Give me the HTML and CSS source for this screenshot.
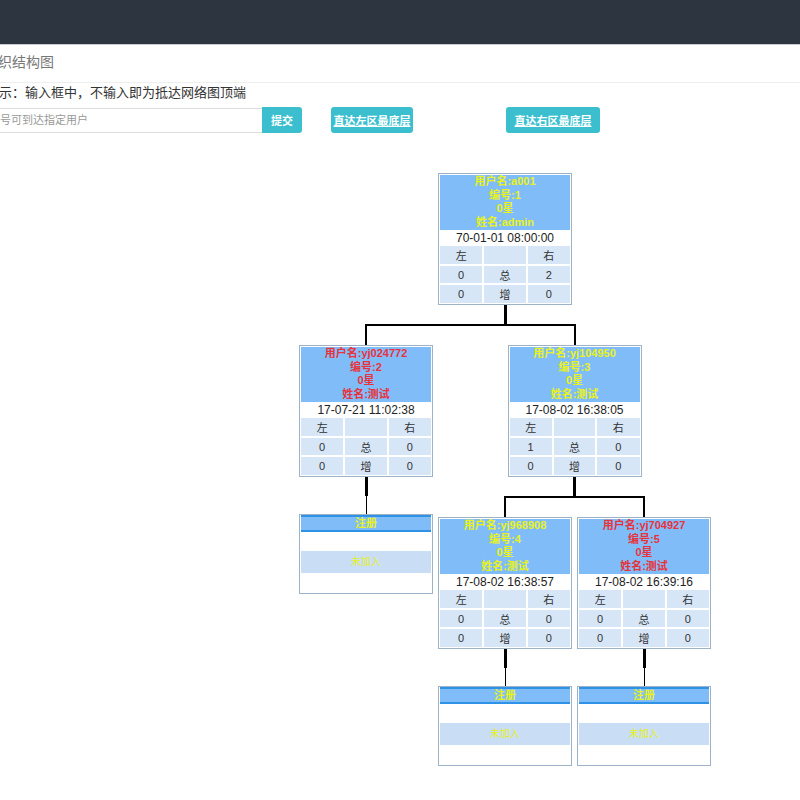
FILE: index.html
```html
<!DOCTYPE html>
<html lang="zh-CN">
<head>
    <meta charset="UTF-8">
    <meta name="viewport" content="width=device-width, initial-scale=1.0">
    <title>组织结构图</title>
    <link rel="stylesheet" href="styles.css">
</head>
<body>
    <div class="topbar"></div>

    <div class="page">
        <div class="page-title">组织结构图</div>
        <p class="tip">提示：输入框中，不输入即为抵达网络图顶端</p>

        <div class="search-row">
            <input type="text" class="search-input" placeholder="请输入会员号可到达指定用户">
            <button class="btn btn-submit">提交</button>
            <a class="btn btn-left" href="#">直达左区最底层</a>
            <a class="btn btn-right" href="#">直达右区最底层</a>
        </div>

        <div class="tree">
            <div class="branch">
                <div class="card">
                    <div class="card-head yellow">用户名:a001<br>编号:1<br>0星<br>姓名:admin</div>
                    <div class="card-date">70-01-01 08:00:00</div>
                    <table class="card-table">
                        <tr><td>左</td><td></td><td>右</td></tr>
                        <tr><td>0</td><td>总</td><td>2</td></tr>
                        <tr><td>0</td><td>增</td><td>0</td></tr>
                    </table>
                </div>
                <div class="stem"></div>
                <div class="kids">
                    <div class="kid">
                        <div class="card">
                            <div class="card-head red">用户名:yj024772<br>编号:2<br>0星<br>姓名:测试</div>
                            <div class="card-date">17-07-21 11:02:38</div>
                            <table class="card-table">
                                <tr><td>左</td><td></td><td>右</td></tr>
                                <tr><td>0</td><td>总</td><td>0</td></tr>
                                <tr><td>0</td><td>增</td><td>0</td></tr>
                            </table>
                        </div>
                        <div class="stem"></div>
                        <div class="kids">
                            <div class="kid">
                                <div class="empty-card">
                                    <div class="empty-head">注册</div>
                                    <div class="empty-blank"></div>
                                    <div class="empty-mid">未加入</div>
                                    <div class="empty-blank"></div>
                                </div>
                            </div>
                        </div>
                    </div>

                    <div class="kid">
                        <div class="card">
                            <div class="card-head yellow">用户名:yj104950<br>编号:3<br>0星<br>姓名:测试</div>
                            <div class="card-date">17-08-02 16:38:05</div>
                            <table class="card-table">
                                <tr><td>左</td><td></td><td>右</td></tr>
                                <tr><td>1</td><td>总</td><td>0</td></tr>
                                <tr><td>0</td><td>增</td><td>0</td></tr>
                            </table>
                        </div>
                        <div class="stem"></div>
                        <div class="kids">
                            <div class="kid">
                                <div class="card">
                                    <div class="card-head yellow">用户名:yj968908<br>编号:4<br>0星<br>姓名:测试</div>
                                    <div class="card-date">17-08-02 16:38:57</div>
                                    <table class="card-table">
                                        <tr><td>左</td><td></td><td>右</td></tr>
                                        <tr><td>0</td><td>总</td><td>0</td></tr>
                                        <tr><td>0</td><td>增</td><td>0</td></tr>
                                    </table>
                                </div>
                                <div class="stem"></div>
                                <div class="kids">
                                    <div class="kid">
                                        <div class="empty-card">
                                            <div class="empty-head">注册</div>
                                            <div class="empty-blank"></div>
                                            <div class="empty-mid">未加入</div>
                                            <div class="empty-blank"></div>
                                        </div>
                                    </div>
                                </div>
                            </div>
                            <div class="kid">
                                <div class="card">
                                    <div class="card-head red">用户名:yj704927<br>编号:5<br>0星<br>姓名:测试</div>
                                    <div class="card-date">17-08-02 16:39:16</div>
                                    <table class="card-table">
                                        <tr><td>左</td><td></td><td>右</td></tr>
                                        <tr><td>0</td><td>总</td><td>0</td></tr>
                                        <tr><td>0</td><td>增</td><td>0</td></tr>
                                    </table>
                                </div>
                                <div class="stem"></div>
                                <div class="kids">
                                    <div class="kid">
                                        <div class="empty-card">
                                            <div class="empty-head">注册</div>
                                            <div class="empty-blank"></div>
                                            <div class="empty-mid">未加入</div>
                                            <div class="empty-blank"></div>
                                        </div>
                                    </div>
                                </div>
                            </div>
                        </div>
                    </div>
                </div>
            </div>
        </div>
    </div>
</body>
</html>
```

FILE: styles.css
```css
* {
    box-sizing: border-box;
    margin: 0;
    padding: 0;
}

body {
    font-family: "Liberation Sans", "Noto Sans CJK SC", sans-serif;
    background: #fff;
    color: #333;
    overflow: hidden;
}

.topbar {
    height: 45px;
    background: #2c3540;
    border-bottom: 1px solid #c9cdd2;
}

.page {
    margin-left: -16px;
}

.page-title {
    height: 38px;
    line-height: 34px;
    font-size: 14px;
    color: #777;
    border-bottom: 1px solid #eee;
}

.tip {
    font-size: 13px;
    line-height: 18px;
    margin-top: 1px;
    margin-left: 2px;
    color: #333;
}

.search-row {
    display: flex;
    align-items: center;
    margin-top: 5px;
    height: 26px;
}

.search-input {
    margin-left: -46px;
    width: 324px;
    height: 25px;
    border: 1px solid #ddd;
    border-right: none;
    padding-left: 6px;
    font-size: 11px;
    font-family: "Liberation Sans", "Noto Sans CJK SC", sans-serif;
    outline: none;
}

.search-input::placeholder {
    color: #999;
}

.btn {
    display: flex;
    align-items: center;
    justify-content: center;
    height: 26px;
    background: #3bbfcf;
    color: #fff;
    border: none;
    font-size: 11px;
    font-weight: bold;
    font-family: "Liberation Serif", "Noto Sans CJK SC", serif;
    text-decoration: underline;
    border-radius: 3px;
    cursor: pointer;
}

.btn-submit {
    width: 40px;
    border-radius: 0 3px 3px 0;
    text-decoration: none;
}

.btn-left {
    width: 82px;
    margin-left: 29px;
}

.btn-right {
    width: 94px;
    margin-left: 93px;
}

/* tree */
.tree {
    display: flex;
    padding-left: 315px;
    margin-top: 40px;
}

.branch,
.kid {
    display: flex;
    flex-direction: column;
    align-items: center;
}

.stem {
    width: 3px;
    height: 19px;
    background: #000;
}

.kids {
    display: flex;
    gap: 5px;
}

.kid {
    position: relative;
    padding-top: 21px;
}

.kid::before {
    content: "";
    position: absolute;
    top: 0;
    left: 50%;
    width: 2px;
    height: 21px;
    margin-left: -1px;
    background: #000;
}

.kid::after {
    content: "";
    position: absolute;
    top: 0;
    left: -3px;
    right: -3px;
    height: 2px;
    background: #000;
}

.kid:first-child::after {
    left: 50%;
}

.kid:last-child::after {
    right: 50%;
}

.kid:only-child {
    padding-top: 18px;
}

.kid:only-child::before {
    width: 1px;
    height: 18px;
    margin-left: 0;
}

.kid:only-child::after {
    display: none;
}

.card {
    width: 134px;
    border: 1px solid #9db2c7;
    padding: 1px;
    background: #fff;
}

.card-head {
    background: #80bdf8;
    font-family: "Liberation Sans", "Noto Sans CJK SC", sans-serif;
    font-weight: bold;
    font-size: 11px;
    line-height: 13.5px;
    text-align: center;
    height: 55px;
}

.yellow {
    color: #e9f220;
}

.red {
    color: #e8323c;
}

.card-date {
    height: 16px;
    line-height: 16px;
    font-size: 12px;
    text-align: center;
    color: #222;
}

.card-table {
    width: 100%;
    border-collapse: collapse;
    border-style: hidden;
    table-layout: fixed;
}

.card-table td {
    border: 2px solid #fff;
    background: #d6e6f7;
    height: 19px;
    padding: 0;
    text-align: center;
    font-size: 11px;
    color: #333;
}

.empty-card {
    width: 134px;
    height: 80px;
    border: 1px solid #9db2c7;
    padding: 0 1px;
    background: #fff;
}

.empty-head {
    height: 17px;
    line-height: 13px;
    background: #80bdf8;
    border-top: 2px solid #2e93e6;
    border-bottom: 2px solid #2e93e6;
    text-align: center;
    color: #e9f220;
    font-weight: bold;
    font-size: 11px;
}

.empty-blank {
    height: 19px;
}

.empty-mid {
    height: 22px;
    line-height: 22px;
    background: #c9def5;
    color: #e6f01a;
    text-align: center;
    font-size: 10px;
}
```
